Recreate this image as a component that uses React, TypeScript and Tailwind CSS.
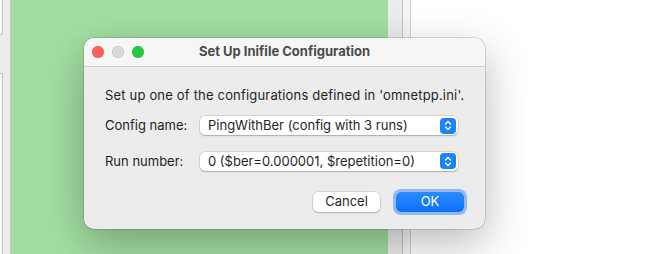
import React from "react";

function Stepper() {
  return (
    <div className="flex h-[16px] w-[16px] items-center justify-center rounded-[4px] bg-[#1c84fb]">
      <svg width="8" height="11" viewBox="0 0 8 11" fill="none">
        <path d="M1.5 4 L4 1.5 L6.5 4" stroke="white" strokeWidth="1.4" strokeLinecap="round" strokeLinejoin="round" />
        <path d="M1.5 7 L4 9.5 L6.5 7" stroke="white" strokeWidth="1.4" strokeLinecap="round" strokeLinejoin="round" />
      </svg>
    </div>
  );
}

function SelectBox({ value }: { value: string }) {
  return (
    <div className="flex h-[19px] w-[258px] items-center justify-between rounded-[5px] bg-white pl-[8px] pr-[2px] shadow-[0_0_0_0.5px_rgba(0,0,0,0.18),0_1px_1.5px_rgba(0,0,0,0.2)]">
      <span className="text-[13px] leading-none text-[#1f1f1f]">{value}</span>
      <Stepper />
    </div>
  );
}

export default function App() {
  return (
    <div
      className="relative flex h-[254px] w-[664px] overflow-hidden bg-white"
      style={{ fontFamily: "Inter, 'Liberation Sans', sans-serif" }}
    >
      {/* left side panel */}
      <div className="flex w-[11px] flex-col border-r border-[#c9c9c9] bg-[#ececec]">
        <div className="h-[35px] w-[3px] border-r border-b border-[#c6c6c6] bg-[#f6f6f6]" />
        <div className="h-[38px]" />
        <div className="flex-1 w-[3px] border-r border-t border-[#c6c6c6] bg-[#f6f6f6]" />
      </div>

      {/* green canvas */}
      <div className="w-[377px] bg-[#a2dea1]" />

      {/* splitter */}
      <div className="w-[15px] border-r border-[#c4c4c4] bg-[#ececec]" />
      <div className="w-[8px] border-r border-[#d2d2d2] bg-[#f6f6f6]" />
      <div className="flex-1 bg-white" />

      {/* dialog */}
      <div className="absolute left-[84px] top-[38px] flex h-[191px] w-[401px] flex-col overflow-hidden rounded-[10px] bg-[#ececec] shadow-[0_0_0_0.5px_rgba(0,0,0,0.25),0_14px_44px_rgba(0,0,0,0.28)]">
        <div className="relative flex h-[29px] items-center justify-center border-b border-[#cfcfcf] bg-[#f6f6f6]">
          <div className="absolute left-[8px] top-[8px] flex gap-[8px]">
            <span className="h-[12px] w-[12px] rounded-full bg-[#fe5f57] shadow-[inset_0_0_0_0.5px_rgba(0,0,0,0.15)]" />
            <span className="h-[12px] w-[12px] rounded-full bg-[#d9d9d9] shadow-[inset_0_0_0_0.5px_rgba(0,0,0,0.15)]" />
            <span className="h-[12px] w-[12px] rounded-full bg-[#28c840] shadow-[inset_0_0_0_0.5px_rgba(0,0,0,0.15)]" />
          </div>
          <span className="text-[13px] font-bold text-[#4b4b4b]">Set Up Inifile Configuration</span>
        </div>

        <div className="flex flex-1 flex-col px-[21px] pt-[20px]">
          <p className="whitespace-nowrap text-[13px] leading-[16px] tracking-[0.18px] text-[#1f1f1f]">
            Set up one of the configurations defined in 'omnetpp.ini'.
          </p>

          <div className="mt-[13px] flex items-center">
            <span className="w-[95px] text-[13px] text-[#1f1f1f]">Config name:</span>
            <SelectBox value="PingWithBer (config with 3 runs)" />
          </div>

          <div className="mt-[16px] flex items-center">
            <span className="w-[95px] text-[13px] text-[#1f1f1f]">Run number:</span>
            <SelectBox value="0 ($ber=0.000001, $repetition=0)" />
          </div>

          <div className="mt-[21px] flex justify-end gap-[16px]">
            <button className="h-[20px] w-[67px] rounded-[5px] bg-white text-[13px] text-[#1f1f1f] shadow-[0_0_0_0.5px_rgba(0,0,0,0.18),0_1px_1.5px_rgba(0,0,0,0.2)]">
              Cancel
            </button>
            <button className="h-[20px] w-[68px] rounded-[5px] bg-gradient-to-b from-[#2b8cff] to-[#0b6ff5] text-[13px] text-white shadow-[0_0_0_3px_rgba(40,125,245,0.45)]">
              OK
            </button>
          </div>
        </div>
      </div>
    </div>
  );
}
